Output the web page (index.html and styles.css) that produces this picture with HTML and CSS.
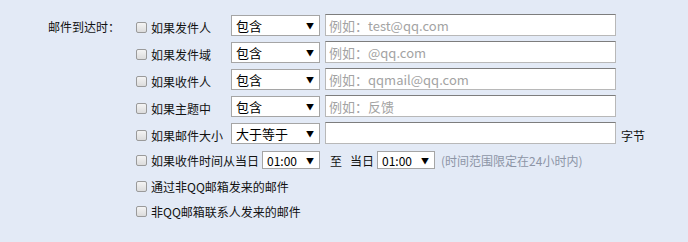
FILE: index.html
```html
<!DOCTYPE html>
<html>
<head>
  <meta charset="utf-8">
  <title>收信规则</title>
  <link rel="stylesheet" href="styles.css">
</head>
<body>
  <div class="rules">
    <div class="rules-label">邮件到达时：</div>
    <div class="rules-list">
      <div class="rule rule-field">
        <label class="check"><input type="checkbox"><span class="cond">如果发件人</span></label>
        <span class="select"><select><option>包含</option><option>不包含</option></select></span>
        <input class="text" type="text" placeholder="例如：test@qq.com">
      </div>
      <div class="rule rule-field">
        <label class="check"><input type="checkbox"><span class="cond">如果发件域</span></label>
        <span class="select"><select><option>包含</option><option>不包含</option></select></span>
        <input class="text" type="text" placeholder="例如：@qq.com">
      </div>
      <div class="rule rule-field">
        <label class="check"><input type="checkbox"><span class="cond">如果收件人</span></label>
        <span class="select"><select><option>包含</option><option>不包含</option></select></span>
        <input class="text" type="text" placeholder="例如：qqmail@qq.com">
      </div>
      <div class="rule rule-field">
        <label class="check"><input type="checkbox"><span class="cond">如果主题中</span></label>
        <span class="select"><select><option>包含</option><option>不包含</option></select></span>
        <input class="text" type="text" placeholder="例如：反馈">
      </div>
      <div class="rule rule-field">
        <label class="check"><input type="checkbox"><span class="cond">如果邮件大小</span></label>
        <span class="select"><select><option>大于等于</option><option>小于</option></select></span>
        <input class="text" type="text">
        <span class="unit">字节</span>
      </div>
      <div class="rule">
        <label class="check"><input type="checkbox"><span>如果收件时间从当日</span></label>
        <span class="select select-time"><select><option>01:00</option><option>02:00</option></select></span>
        <span class="to">至</span>
        <span>当日</span>
        <span class="select select-time"><select><option>01:00</option><option>02:00</option></select></span>
        <span class="hint">(时间范围限定在24小时内)</span>
      </div>
      <div class="rule rule-plain">
        <label class="check"><input type="checkbox"><span>通过非QQ邮箱发来的邮件</span></label>
      </div>
      <div class="rule rule-plain">
        <label class="check"><input type="checkbox"><span>非QQ邮箱联系人发来的邮件</span></label>
      </div>
    </div>
  </div>
</body>
</html>
```

FILE: styles.css
```css
body {
  margin: 0;
  background-color: #e3eaf6;
  font-family: "Microsoft YaHei", "Noto Sans CJK SC", sans-serif;
  font-size: 12px;
  color: #111;
}
.rules {
  display: flex;
  padding-top: 14px;
}
.rules-label {
  width: 120px;
  text-align: right;
  line-height: 22px;
  padding-top: 2px;
}
.rules-list {
  margin-left: 16px;
}
.rule {
  display: flex;
  align-items: center;
  height: 22px;
  margin-bottom: 5px;
  white-space: nowrap;
}
.rule-plain {
  height: 20px;
}
.check {
  display: flex;
  align-items: center;
}
.rule-field .check {
  margin-top: 5px;
}
.check input {
  appearance: none;
  width: 11px;
  height: 11px;
  margin: 0 4px 0 0;
  border: 1px solid #9a9a9a;
  border-radius: 2px;
  background: linear-gradient(#f4f4f4, #dcdcdc);
}
.check input:checked {
  background: #fff;
}
.cond {
  width: 80px;
}
.select {
  position: relative;
  display: inline-block;
}
.select select {
  appearance: none;
  width: 89px;
  height: 21px;
  margin: 0;
  padding: 0 0 0 4px;
  border: 1px solid #a5a5a5;
  border-radius: 0;
  background: #fff;
  font-family: inherit;
  font-size: 13px;
  color: #000;
}
.select::after {
  content: "▼";
  position: absolute;
  right: 6px;
  top: 50%;
  transform: translateY(-50%);
  font-size: 8px;
  color: #000;
  pointer-events: none;
}
.select-time select {
  width: 58px;
  height: 18px;
  font-size: 12px;
}
.text {
  width: 291px;
  height: 22px;
  box-sizing: border-box;
  margin: 0 0 0 5px;
  padding: 0 3px;
  border: 1px solid #b8b8b8;
  border-top-color: #7d7d7d;
  font-family: inherit;
  font-size: 13px;
}
.text::placeholder {
  color: #a3a3a3;
}
.unit {
  margin-left: 5px;
  margin-top: 5px;
}
.to {
  margin: 0 8px 0 10px;
}
.select-time {
  margin-left: 3px;
}
.hint {
  margin-left: 6px;
  color: #8d95a6;
}
```
